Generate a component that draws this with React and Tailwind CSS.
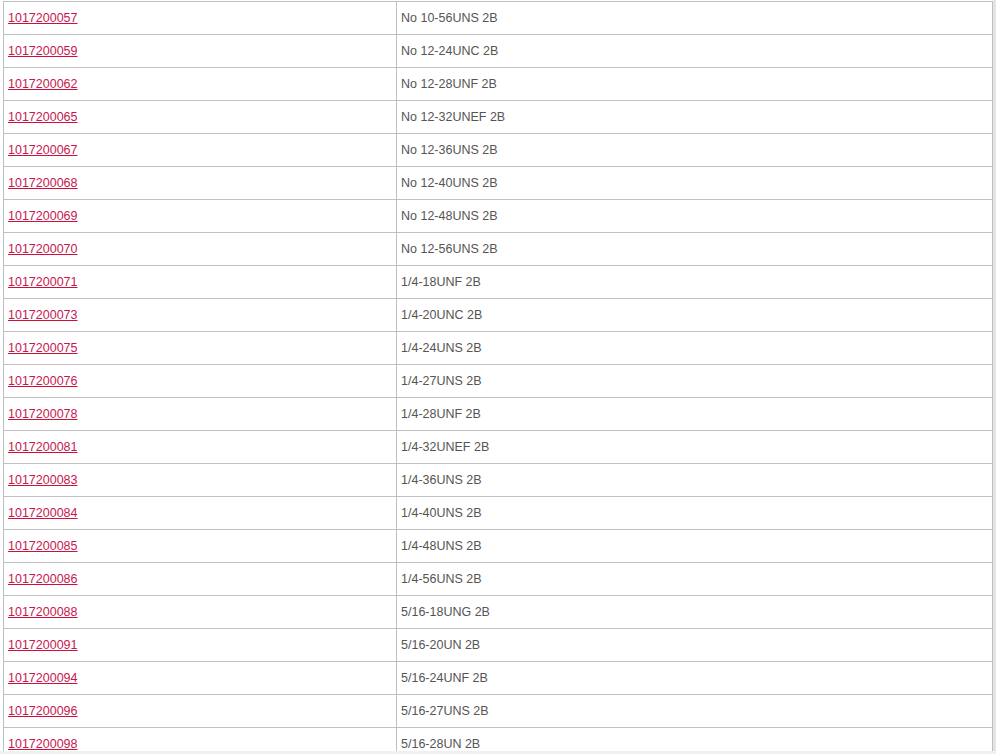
const rows = [
  ['1017200057', 'No 10-56UNS 2B'],
  ['1017200059', 'No 12-24UNC 2B'],
  ['1017200062', 'No 12-28UNF 2B'],
  ['1017200065', 'No 12-32UNEF 2B'],
  ['1017200067', 'No 12-36UNS 2B'],
  ['1017200068', 'No 12-40UNS 2B'],
  ['1017200069', 'No 12-48UNS 2B'],
  ['1017200070', 'No 12-56UNS 2B'],
  ['1017200071', '1/4-18UNF 2B'],
  ['1017200073', '1/4-20UNC 2B'],
  ['1017200075', '1/4-24UNS 2B'],
  ['1017200076', '1/4-27UNS 2B'],
  ['1017200078', '1/4-28UNF 2B'],
  ['1017200081', '1/4-32UNEF 2B'],
  ['1017200083', '1/4-36UNS 2B'],
  ['1017200084', '1/4-40UNS 2B'],
  ['1017200085', '1/4-48UNS 2B'],
  ['1017200086', '1/4-56UNS 2B'],
  ['1017200088', '5/16-18UNG 2B'],
  ['1017200091', '5/16-20UN 2B'],
  ['1017200094', '5/16-24UNF 2B'],
  ['1017200096', '5/16-27UNS 2B'],
  ['1017200098', '5/16-28UN 2B'],
]

export default function App() {
  return (
    <main className="h-[754px] w-[996px] overflow-hidden bg-white font-['Liberation_Sans',Arial,sans-serif] text-[12.5px]">
      <div className="flex h-[751px] overflow-hidden">
        <div className="ml-[3px] mt-[1px] w-[990px]">
          <table className="w-full border-collapse table-fixed">
            <colgroup>
              <col className="w-[393px]" />
              <col />
            </colgroup>
            <tbody>
              {rows.map(([code, thread]) => (
                <tr key={code} className="h-[33px]">
                  <td className="border border-[#c0c0c0] px-[4px] align-middle">
                    <a href="#" className="text-[#c8174f] underline decoration-[#d0103a]">
                      {code}
                    </a>
                  </td>
                  <td className="border border-[#c0c0c0] px-[4px] align-middle text-[#555555]">
                    {thread}
                  </td>
                </tr>
              ))}
            </tbody>
          </table>
        </div>
        <div className="w-[3px] bg-[#e4e4e4]" />
      </div>
      <div className="h-[3px] bg-[#f0f0f0]" />
    </main>
  )
}
